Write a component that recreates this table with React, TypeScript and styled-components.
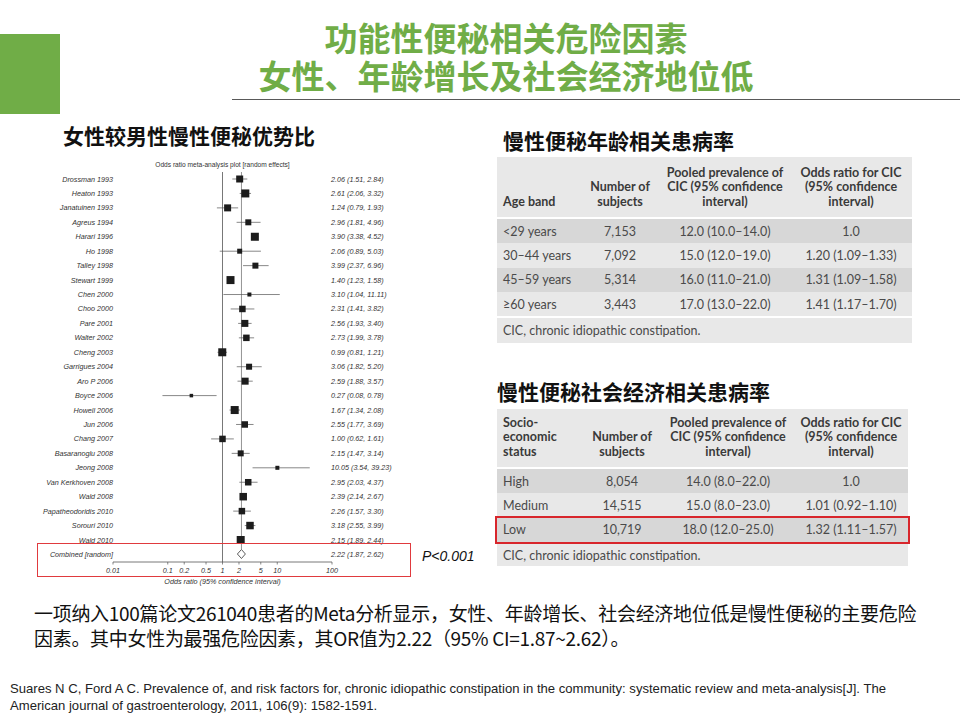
import React from "react";
import styled, { createGlobalStyle } from "styled-components";

const GlobalStyle = createGlobalStyle`
  html, body { margin: 0; padding: 0; background: #ffffff; }
  #root { width: 960px; }
`;

const CJK = `"Noto Sans CJK SC", "Noto Sans", sans-serif`;

const Page = styled.div`
  width: 960px;
  height: 720px;
  overflow: hidden;
  background: #fff;
  font-family: ${CJK};
`;

const Header = styled.header`
  display: flex;
  height: 118px;
`;

const GreenBlock = styled.div`
  flex: none;
  width: 60px;
  height: 80px;
  margin-top: 34px;
  background: #70ad47;
`;

const TitleCol = styled.div`
  flex: 1;
  display: flex;
  flex-direction: column;
  padding-top: 18px;
`;

const TitleLine = styled.h1`
  margin: 0;
  height: 38px;
  padding-right: 8px;
  text-align: center;
  font: 700 33px/38px ${CJK};
  color: #70ad47;
  white-space: nowrap;
`;

const Rule = styled.div`
  margin: 5px 0 0 172px;
  border-top: 1.5px solid #595959;
`;

const Main = styled.main`
  display: grid;
  grid-template-columns: 450px 415px;
  column-gap: 17px;
  padding-left: 30px;
  height: 472px;
`;

const Column = styled.section`
  display: flex;
  flex-direction: column;
`;

const SubTitle = styled.h2<{ $mt: number; $ml: number }>`
  margin: ${(p) => p.$mt}px 0 0 ${(p) => p.$ml}px;
  font: 700 21px/24px ${CJK};
  color: #111;
  white-space: nowrap;
`;

const ForestWrap = styled.div`
  position: relative;
  margin-top: 8px;
  width: 450px;
  height: 435px;
`;

const HighlightBox = styled.div`
  position: absolute;
  left: 7px;
  top: 388px;
  width: 374px;
  height: 34px;
  border: 1.5px solid #e03a3e;
  box-sizing: border-box;
`;

const PValue = styled.div`
  position: absolute;
  left: 392px;
  top: 393px;
  font: italic 14px/16px "Liberation Sans", Arial, sans-serif;
  color: #111;
`;

const TableBox = styled.div<{ $mt: number; $w: number }>`
  margin-top: ${(p) => p.$mt}px;
  width: ${(p) => p.$w}px;
  display: flex;
  flex-direction: column;
  gap: 2px;
  background: #fff;
  font-family: Lato, "Open Sans", sans-serif;
`;

const HeadRow = styled.div<{ $cols: string; $h: number }>`
  display: grid;
  grid-template-columns: ${(p) => p.$cols};
  height: ${(p) => p.$h}px;
  align-items: end;
  padding-bottom: 8px;
  box-sizing: border-box;
  background: #e8e8e8;
`;

const HeadCell = styled.div<{ $left?: boolean }>`
  text-align: ${(p) => (p.$left ? "left" : "center")};
  padding-left: ${(p) => (p.$left ? "6px" : "0")};
  font-size: 12.5px;
  line-height: 14.5px;
  font-weight: 700;
  color: #3a3a3a;
`;

const Body = styled.div`
  display: flex;
  flex-direction: column;
`;

const Row = styled.div<{ $cols: string; $dark: boolean; $mark?: boolean }>`
  display: grid;
  grid-template-columns: ${(p) => p.$cols};
  height: 24.3px;
  align-items: center;
  background: ${(p) => (p.$dark ? "#d7d7d7" : "#e8e8e8")};
  outline: ${(p) => (p.$mark ? "2px solid #d8262c" : "none")};
`;

const Cell = styled.div<{ $left?: boolean }>`
  text-align: ${(p) => (p.$left ? "left" : "center")};
  padding-left: ${(p) => (p.$left ? "6px" : "0")};
  font-size: 12.5px;
  color: #4a4a4a;
  white-space: nowrap;
`;

const Foot = styled.div<{ $h: number }>`
  height: ${(p) => p.$h}px;
  display: flex;
  align-items: center;
  padding-left: 6px;
  background: #e8e8e8;
  font-size: 12.5px;
  color: #4a4a4a;
`;

const Summary = styled.p`
  margin: 10px 0 0 34px;
  font: 400 19px/25px ${CJK};
  letter-spacing: -0.3px;
  color: #111;
  white-space: nowrap;
`;

const Citation = styled.p`
  margin: 30px 0 0 10px;
  font: 400 13.1px/17px "Liberation Sans", Arial, sans-serif;
  color: #222;
  white-space: nowrap;
`;

/* ---------- forest plot ---------- */

type Study = { name: string; or: number; lo: number; hi: number; s: number; txt: string };

const studies: Study[] = [
  { name: "Drossman 1993", or: 2.06, lo: 1.51, hi: 2.84, s: 7, txt: "2.06 (1.51, 2.84)" },
  { name: "Heaton 1993", or: 2.61, lo: 2.06, hi: 3.32, s: 8, txt: "2.61 (2.06, 3.32)" },
  { name: "Janatuinen 1993", or: 1.24, lo: 0.79, hi: 1.93, s: 7, txt: "1.24 (0.79, 1.93)" },
  { name: "Agreus 1994", or: 2.96, lo: 1.81, hi: 4.96, s: 6, txt: "2.96 (1.81, 4.96)" },
  { name: "Harari 1996", or: 3.9, lo: 3.38, hi: 4.52, s: 8, txt: "3.90 (3.38, 4.52)" },
  { name: "Ho 1998", or: 2.06, lo: 0.89, hi: 5.03, s: 5, txt: "2.06 (0.89, 5.03)" },
  { name: "Talley 1998", or: 3.99, lo: 2.37, hi: 6.96, s: 6, txt: "3.99 (2.37, 6.96)" },
  { name: "Stewart 1999", or: 1.4, lo: 1.23, hi: 1.58, s: 8, txt: "1.40 (1.23, 1.58)" },
  { name: "Chen 2000", or: 3.1, lo: 1.04, hi: 11.11, s: 4, txt: "3.10 (1.04, 11.11)" },
  { name: "Choo 2000", or: 2.31, lo: 1.41, hi: 3.82, s: 6.5, txt: "2.31 (1.41, 3.82)" },
  { name: "Pare 2001", or: 2.56, lo: 1.93, hi: 3.4, s: 7, txt: "2.56 (1.93, 3.40)" },
  { name: "Walter 2002", or: 2.73, lo: 1.99, hi: 3.78, s: 6.5, txt: "2.73 (1.99, 3.78)" },
  { name: "Cheng 2003", or: 0.99, lo: 0.81, hi: 1.21, s: 8, txt: "0.99 (0.81, 1.21)" },
  { name: "Garrigues 2004", or: 3.06, lo: 1.82, hi: 5.2, s: 6, txt: "3.06 (1.82, 5.20)" },
  { name: "Aro P 2006", or: 2.59, lo: 1.88, hi: 3.57, s: 7, txt: "2.59 (1.88, 3.57)" },
  { name: "Boyce 2006", or: 0.27, lo: 0.08, hi: 0.78, s: 3.5, txt: "0.27 (0.08, 0.78)" },
  { name: "Howell 2006", or: 1.67, lo: 1.34, hi: 2.08, s: 8, txt: "1.67 (1.34, 2.08)" },
  { name: "Jun 2006", or: 2.55, lo: 1.77, hi: 3.69, s: 6.5, txt: "2.55 (1.77, 3.69)" },
  { name: "Chang 2007", or: 1.0, lo: 0.62, hi: 1.61, s: 6.5, txt: "1.00 (0.62, 1.61)" },
  { name: "Basaranoglu 2008", or: 2.15, lo: 1.47, hi: 3.14, s: 6, txt: "2.15 (1.47, 3.14)" },
  { name: "Jeong 2008", or: 10.05, lo: 3.54, hi: 39.23, s: 4, txt: "10.05 (3.54, 39.23)" },
  { name: "Van Kerkhoven 2008", or: 2.95, lo: 2.03, hi: 4.37, s: 6.5, txt: "2.95 (2.03, 4.37)" },
  { name: "Wald 2008", or: 2.39, lo: 2.14, hi: 2.67, s: 7.5, txt: "2.39 (2.14, 2.67)" },
  { name: "Papatheodoridis 2010", or: 2.26, lo: 1.57, hi: 3.3, s: 6.5, txt: "2.26 (1.57, 3.30)" },
  { name: "Sorouri 2010", or: 3.18, lo: 2.55, hi: 3.99, s: 7.5, txt: "3.18 (2.55, 3.99)" },
  { name: "Wald 2010", or: 2.15, lo: 1.89, hi: 2.44, s: 8, txt: "2.15 (1.89, 2.44)" },
];

const X0 = 113;
const DEC = 54.75;
const lx = (v: number) => X0 + (Math.log10(Math.min(100, Math.max(0.01, v))) + 2) * DEC;
const rowY = (i: number) => 179 + i * 14.44;
const ticks = [
  { v: 0.01, t: "0.01" },
  { v: 0.1, t: "0.1" },
  { v: 0.2, t: "0.2" },
  { v: 0.5, t: "0.5" },
  { v: 1, t: "1" },
  { v: 2, t: "2" },
  { v: 5, t: "5" },
  { v: 10, t: "10" },
  { v: 100, t: "100" },
];

const PlotSvg = styled.svg`
  display: block;
  font-family: "Liberation Sans", Arial, sans-serif;
`;

function ForestPlot() {
  const combY = 554;
  const axisY = 562;
  return (
    <PlotSvg width={450} height={435} viewBox="30 155 450 435">
      <text x={222.5} y={167} fontSize={6.6} textAnchor="middle" fill="#333">
        Odds ratio meta-analysis plot [random effects]
      </text>
      <line x1={lx(1)} y1={172} x2={lx(1)} y2={axisY} stroke="#555" strokeWidth={0.8} />
      <line x1={lx(2.22)} y1={172} x2={lx(2.22)} y2={549} stroke="#666" strokeWidth={0.7} />
      {studies.map((s, i) => {
        const y = rowY(i);
        const cx = lx(s.or);
        return (
          <g key={s.name}>
            <text x={113} y={y + 2.5} fontSize={7.2} fontStyle="italic" textAnchor="end" fill="#333">
              {s.name}
            </text>
            <line x1={lx(s.lo)} y1={y} x2={lx(s.hi)} y2={y} stroke="#555" strokeWidth={0.7} />
            <rect x={cx - s.s / 2} y={y - s.s / 2} width={s.s} height={s.s} fill="#1c1c1c" />
            <text x={331} y={y + 2.5} fontSize={7.2} fontStyle="italic" fill="#333">
              {s.txt}
            </text>
          </g>
        );
      })}
      <text x={113} y={combY + 2.5} fontSize={7.2} fontStyle="italic" textAnchor="end" fill="#333">
        Combined [random]
      </text>
      <polygon
        points={`${lx(1.87)},${combY} ${lx(2.22)},${combY - 4.5} ${lx(2.62)},${combY} ${lx(2.22)},${combY + 4.5}`}
        fill="#fff"
        stroke="#333"
        strokeWidth={0.8}
      />
      <text x={331} y={combY + 2.5} fontSize={7.2} fontStyle="italic" fill="#333">
        2.22 (1.87, 2.62)
      </text>
      <line x1={X0} y1={axisY} x2={lx(100)} y2={axisY} stroke="#555" strokeWidth={0.8} />
      {ticks.map((t) => (
        <g key={t.t}>
          <line x1={lx(t.v)} y1={axisY} x2={lx(t.v)} y2={axisY + 2.5} stroke="#555" strokeWidth={0.7} />
          <text x={lx(t.v)} y={axisY + 11} fontSize={7.2} fontStyle="italic" textAnchor="middle" fill="#333">
            {t.t}
          </text>
        </g>
      ))}
      <text x={222.5} y={axisY + 22} fontSize={7.2} fontStyle="italic" textAnchor="middle" fill="#333">
        Odds ratio (95% confidence interval)
      </text>
    </PlotSvg>
  );
}

/* ---------- tables ---------- */

type TableProps = {
  cols: string;
  width: number;
  mt: number;
  headH: number;
  footH: number;
  head: React.ReactNode[];
  rows: string[][];
  mark?: number;
};

function DataTable({ cols, width, mt, headH, footH, head, rows, mark }: TableProps) {
  return (
    <TableBox $mt={mt} $w={width}>
      <HeadRow $cols={cols} $h={headH}>
        {head.map((h, i) => (
          <HeadCell key={i} $left={i === 0}>
            {h}
          </HeadCell>
        ))}
      </HeadRow>
      <Body>
        {rows.map((r, i) => (
          <Row key={i} $cols={cols} $dark={i % 2 === 0} $mark={mark === i}>
            {r.map((c, j) => (
              <Cell key={j} $left={j === 0}>
                {c}
              </Cell>
            ))}
          </Row>
        ))}
      </Body>
      <Foot $h={footH}>CIC, chronic idiopathic constipation.</Foot>
    </TableBox>
  );
}

const pooledHead = (
  <>
    Pooled prevalence of
    <br />
    CIC (95% confidence
    <br />
    interval)
  </>
);
const oddsHead = (
  <>
    Odds ratio for CIC
    <br />
    (95% confidence
    <br />
    interval)
  </>
);
const numHead = (
  <>
    Number of
    <br />
    subjects
  </>
);

export default function App() {
  return (
    <Page>
      <GlobalStyle />
      <Header>
        <GreenBlock />
        <TitleCol>
          <TitleLine>功能性便秘相关危险因素</TitleLine>
          <TitleLine>女性、年龄增长及社会经济地位低</TitleLine>
          <Rule />
        </TitleCol>
      </Header>
      <Main>
        <Column>
          <SubTitle $mt={5} $ml={33}>女性较男性慢性便秘优势比</SubTitle>
          <ForestWrap>
            <ForestPlot />
            <HighlightBox />
            <PValue>P&lt;0.001</PValue>
          </ForestWrap>
        </Column>
        <Column>
          <SubTitle $mt={10} $ml={6}>慢性便秘年龄相关患病率</SubTitle>
          <DataTable
            cols="83px 80px 130px 122px"
            width={415}
            mt={5}
            headH={60}
            footH={25}
            head={["Age band", numHead, pooledHead, oddsHead]}
            rows={[
              ["<29 years", "7,153", "12.0 (10.0–14.0)", "1.0"],
              ["30–44 years", "7,092", "15.0 (12.0–19.0)", "1.20 (1.09–1.33)"],
              ["45–59 years", "5,314", "16.0 (11.0–21.0)", "1.31 (1.09–1.58)"],
              ["≥60 years", "3,443", "17.0 (13.0–22.0)", "1.41 (1.17–1.70)"],
            ]}
          />
          <SubTitle $mt={36} $ml={0}>慢性便秘社会经济相关患病率</SubTitle>
          <DataTable
            cols="85px 80px 132px 114px"
            width={411}
            mt={6}
            headH={58}
            footH={22}
            head={[
              <>
                Socio-
                <br />
                economic
                <br />
                status
              </>,
              numHead,
              pooledHead,
              oddsHead,
            ]}
            rows={[
              ["High", "8,054", "14.0 (8.0–22.0)", "1.0"],
              ["Medium", "14,515", "15.0 (8.0–23.0)", "1.01 (0.92–1.10)"],
              ["Low", "10,719", "18.0 (12.0–25.0)", "1.32 (1.11–1.57)"],
            ]}
            mark={2}
          />
        </Column>
      </Main>
      <Summary>
        一项纳入100篇论文261040患者的Meta分析显示，女性、年龄增长、社会经济地位低是慢性便秘的主要危险
        <br />
        因素。其中女性为最强危险因素，其OR值为2.22（95% CI=1.87~2.62）。
      </Summary>
      <Citation>
        Suares N C, Ford A C. Prevalence of, and risk factors for, chronic idiopathic constipation in the community:
        systematic review and meta-analysis[J]. The
        <br />
        American journal of gastroenterology, 2011, 106(9): 1582-1591.
      </Citation>
    </Page>
  );
}
